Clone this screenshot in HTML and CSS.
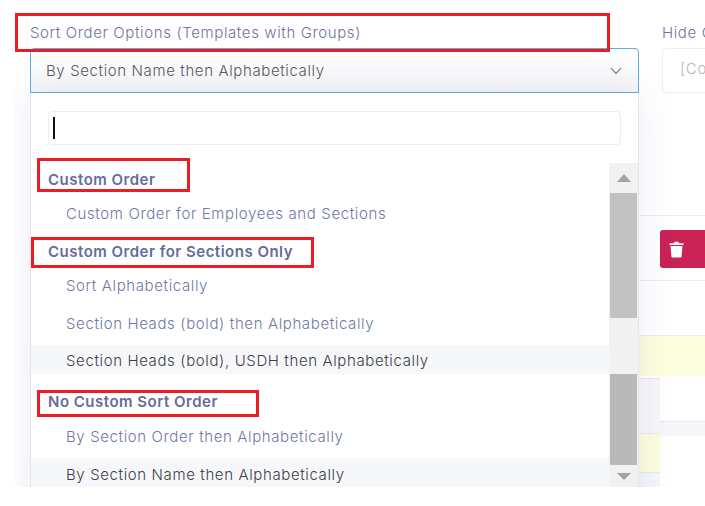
FILE: index.html
```html
<!DOCTYPE html>
<html lang="en">
<head>
    <meta charset="UTF-8">
    <title>Sort Order Options</title>
    <link rel="stylesheet" href="styles.css">
</head>
<body>
    <div class="stage">
        <div class="sheet">
            <!-- Form fields -->
            <div class="form-row">
                <div class="field">
                    <div class="field-label">Sort Order Options (Templates with Groups)</div>
                    <div class="select-box">
                        <span class="select-text">By Section Name then Alphabetically</span>
                        <svg class="chevron" width="12" height="8" viewBox="0 0 12 8">
                            <path d="M1 1.2 L6 6.4 L11 1.2" fill="none" stroke="#74788d" stroke-width="1.1"/>
                        </svg>
                    </div>

                    <!-- Open dropdown -->
                    <div class="dropdown">
                        <div class="search-wrap">
                            <div class="search-input"><span class="caret"></span></div>
                        </div>
                        <div class="list-wrap">
                            <div class="list">
                                <div class="group-label">Custom Order</div>
                                <div class="option">Custom Order for Employees and Sections</div>
                                <div class="group-label">Custom Order for Sections Only</div>
                                <div class="option">Sort Alphabetically</div>
                                <div class="option">Section Heads (bold) then Alphabetically</div>
                                <div class="option active">Section Heads (bold), USDH then Alphabetically</div>
                                <div class="group-label last-group">No Custom Sort Order</div>
                                <div class="option">By Section Order then Alphabetically</div>
                                <div class="option active">By Section Name then Alphabetically</div>
                            </div>
                            <div class="scrollbar">
                                <div class="scroll-btn up"><span class="arrow-up"></span></div>
                                <div class="thumb thumb-top"></div>
                                <div class="thumb-gap"></div>
                                <div class="thumb thumb-bottom"></div>
                                <div class="scroll-btn down"><span class="arrow-down"></span></div>
                            </div>
                        </div>
                    </div>
                </div>
                <div class="field side-field">
                    <div class="field-label">Hide Columns</div>
                    <div class="side-input">[Columns]</div>
                </div>
            </div>

            <!-- Table rows behind the dropdown -->
            <div class="rows">
                <div class="row row-action">
                    <button class="delete-btn">
                        <svg width="15" height="17" viewBox="0 0 15 17">
                            <path d="M0.5 2.2 H5 L5.6 0.8 H9.4 L10 2.2 H14.5 V4 H0.5 Z M1.6 5 H13.4 L12.6 15.6 Q12.5 16.6 11.5 16.6 H3.5 Q2.5 16.6 2.4 15.6 Z" fill="#fff"/>
                        </svg>
                    </button>
                </div>
                <div class="row row-plain"></div>
                <div class="row row-yellow"></div>
                <div class="row-split">
                    <div class="split-cell"></div>
                    <div class="split-rest"></div>
                </div>
                <div class="row-short row-yellow-short"></div>
                <div class="row-short row-grey-short"></div>
            </div>
        </div>

        <!-- Red annotation boxes -->
        <div class="mark mark-title"></div>
        <div class="mark mark-custom"></div>
        <div class="mark mark-sections"></div>
        <div class="mark mark-none"></div>
    </div>
</body>
</html>
```

FILE: styles.css
```css
/* Reset and base styles */
* {
    margin: 0;
    padding: 0;
    box-sizing: border-box;
}

body {
    overflow: hidden;
    height: 100vh;
    background-color: #fff;
    font-family: "Inter", "Open Sans", sans-serif;
}

.stage {
    position: relative;
    width: 705px;
    height: 506px;
    padding-left: 14px;
}

.sheet {
    width: 691px;
    height: 487px;
    overflow: hidden;
    border-bottom-left-radius: 6px;
    background-color: #fff;
}

/* Form fields */
.form-row {
    display: flex;
    gap: 23px;
    height: 215px;
    padding: 23px 0 0 16px;
}

.field {
    position: relative;
    flex: 0 0 609px;
}

.side-field {
    flex: 0 0 200px;
}

.field-label {
    height: 25px;
    font-size: 15px;
    line-height: 19px;
    font-weight: 300;
    letter-spacing: 0.62px;
    color: #6b75a0;
    white-space: nowrap;
}

.select-box {
    display: flex;
    align-items: center;
    justify-content: space-between;
    height: 45px;
    padding: 0 11px 0 15px;
    border: 1px solid #5dace8;
    border-radius: 4px 4px 0 0;
    background: linear-gradient(#fff, #f4f5f8);
}

.select-text {
    font-size: 15px;
    font-weight: 300;
    letter-spacing: 0.62px;
    color: #575962;
}

.chevron {
    margin-top: 1px;
    margin-right: 5px;
}

.side-input {
    height: 45px;
    padding: 10px 17px;
    border: 1px solid #ebedf2;
    border-radius: 4px;
    font-size: 15px;
    font-weight: 300;
    letter-spacing: 0.62px;
    color: #b5b5bd;
    white-space: nowrap;
    overflow: hidden;
}

/* Dropdown */
.dropdown {
    position: absolute;
    top: 70px;
    left: 0;
    z-index: 2;
    width: 609px;
    height: 420px;
    background-color: #fff;
    border-left: 1px solid #e3e6f2;
    border-right: 1px solid #e3e6f2;
    box-shadow: 0 0 34px rgba(82, 63, 145, 0.11);
}

.search-wrap {
    padding: 18px 17px;
}

.search-input {
    height: 34px;
    padding: 5px 4px;
    border: 1px solid #ebedf2;
    border-radius: 4px;
}

.caret {
    display: block;
    width: 2px;
    height: 22px;
    background-color: #111;
}

.list-wrap {
    display: flex;
}

.list {
    flex: 1;
}

.group-label {
    height: 34.5px;
    padding-left: 17px;
    line-height: 33px;
    font-size: 15px;
    font-weight: 600;
    letter-spacing: 0.5px;
    color: #646c9a;
}

.group-label.last-group {
    height: 38.5px;
    padding-top: 3px;
}

.option {
    height: 29.5px;
    margin-bottom: 8px;
    padding: 2.5px 0 0 35px;
    line-height: 27.5px;
    font-size: 15px;
    font-weight: 300;
    letter-spacing: 0.62px;
    color: #6f78a8;
    white-space: nowrap;
}

.option.active {
    background-color: #f6f7fa;
    color: #3f4047;
}

/* Scrollbar */
.scrollbar {
    display: flex;
    flex-direction: column;
    flex: 0 0 29px;
    padding: 0 1px;
    background-color: #f1f1f1;
}

.scroll-btn {
    display: flex;
    align-items: center;
    justify-content: center;
}

.scroll-btn.up {
    height: 30px;
}

.scroll-btn.down {
    height: 22px;
}

.arrow-up {
    width: 0;
    height: 0;
    border-left: 7.5px solid transparent;
    border-right: 7.5px solid transparent;
    border-bottom: 8px solid #a3a3a3;
}

.arrow-down {
    width: 0;
    height: 0;
    border-left: 7.5px solid transparent;
    border-right: 7.5px solid transparent;
    border-top: 7px solid #a3a3a3;
}

.thumb-top {
    height: 125px;
    background-color: #c1c1c1;
}

.thumb-gap {
    height: 56px;
}

.thumb-bottom {
    height: 91px;
    background-color: #b9b9b9;
}

/* Table rows behind the dropdown */
.rows {
    padding-left: 16px;
}

.row {
    border-top: 1px solid #ebedf5;
}

.row-action {
    height: 65px;
    padding: 14px 0 0 630px;
}

.delete-btn {
    display: flex;
    align-items: center;
    justify-content: center;
    width: 60px;
    height: 38px;
    padding-right: 27px;
    border: none;
    border-radius: 3px 0 0 3px;
    background-color: #cb2256;
}

.row-plain {
    height: 55px;
}

.row-yellow {
    height: 41px;
    background-color: #fdfedd;
}

.row-split {
    display: flex;
    height: 58px;
}

.split-cell {
    flex: 0 0 630px;
    margin-top: 2px;
    border-top: 1px solid #e8e8f2;
    border-bottom: 1px solid #e8e8f2;
    background-color: #f7f7fb;
}

.split-rest {
    flex: 1;
    height: 60px;
    background: linear-gradient(#fff 45px, #e8e8f2 45px, #e8e8f2 46px, #f6f7fa 46px);
}

.row-short {
    width: 630px;
}

.row-yellow-short {
    height: 39px;
    border-bottom: 1px solid #e8e8f2;
    background-color: #fdfedd;
}

.row-grey-short {
    height: 15px;
    background-color: #f5f6fa;
}

/* Red annotation boxes */
.mark {
    position: absolute;
    z-index: 3;
    border: 3px solid #ed1c24;
}

.mark-title {
    top: 13px;
    left: 15px;
    width: 595px;
    height: 39px;
}

.mark-custom {
    top: 158px;
    left: 37px;
    width: 153px;
    height: 34px;
}

.mark-sections {
    top: 237px;
    left: 31px;
    width: 283px;
    height: 31px;
}

.mark-none {
    top: 390px;
    left: 37px;
    width: 222px;
    height: 27px;
}
```
